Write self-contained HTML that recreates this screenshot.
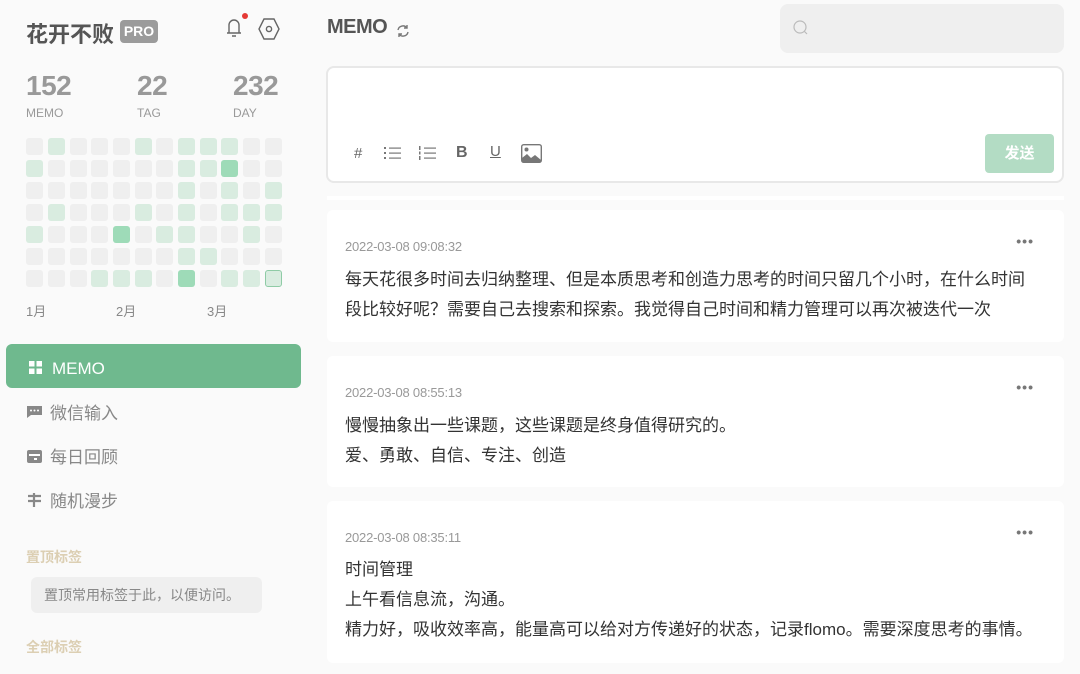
<!DOCTYPE html>
<html><head><meta charset="utf-8"><style>
*{margin:0;padding:0;box-sizing:border-box}
body{width:1080px;height:674px;background:#fafafa;font-family:"Liberation Sans","Noto Sans CJK SC",sans-serif;position:relative;overflow:hidden;color:#333}
.abs{position:absolute}
.cell{position:absolute;width:17px;height:17px;border-radius:3px;background:#efefef}
.c1{background:#d9ece0}.c2{background:#9edbb8}.c3{background:#d9ece0;border:1.5px solid #8fcba6}
.nav{position:absolute;left:26px;font-size:17px;color:#888;display:flex;align-items:center}
.card{position:absolute;left:327px;width:737px;background:#fff;border-radius:6px}
.ts{position:absolute;left:18px;font-size:13px;color:#999;letter-spacing:-0.2px}
.dots{position:absolute;right:30px;font-size:14px;color:#777;letter-spacing:1px;font-weight:bold}
.txt{position:absolute;left:18px;font-size:17px;line-height:30px;color:#333;white-space:nowrap}
</style></head><body>
<div class="abs" style="left:26px;top:17px;font-size:22px;font-weight:bold;color:#555">花开不败</div>
<div class="abs" style="left:120px;top:20px;width:38px;height:23px;background:#9b9b9b;border-radius:4px;color:#fff;font-size:14px;font-weight:bold;text-align:center;line-height:23px">PRO</div>
<svg class="abs" style="left:222px;top:12px" width="26" height="28" viewBox="0 0 26 28"><path d="M5 21h14M7 21V13a5 5 0 0 1 10 0v8M10 24h4" stroke="#666" stroke-width="1.4" fill="none"/><circle cx="23" cy="4" r="3" fill="#e53935"/></svg>
<svg class="abs" style="left:257px;top:17px" width="24" height="24" viewBox="0 0 24 24"><path d="M7 2h10l5 10-5 10H7L2 12z" stroke="#666" stroke-width="1.4" fill="none"/><circle cx="12" cy="12" r="2.6" stroke="#666" stroke-width="1.4" fill="none"/></svg>
<div class="abs" style="left:26px;top:70px;font-size:28px;font-weight:bold;color:#999;letter-spacing:-0.5px">152</div>
<div class="abs" style="left:137px;top:70px;font-size:28px;font-weight:bold;color:#999;letter-spacing:-0.5px">22</div>
<div class="abs" style="left:233px;top:70px;font-size:28px;font-weight:bold;color:#999;letter-spacing:-0.5px">232</div>
<div class="abs" style="left:26px;top:106px;font-size:12px;color:#999">MEMO</div>
<div class="abs" style="left:137px;top:106px;font-size:12px;color:#999">TAG</div>
<div class="abs" style="left:233px;top:106px;font-size:12px;color:#999">DAY</div>
<div id="grid"></div>
<div class="abs" style="left:26px;top:301px;font-size:13px;color:#888">1月</div>
<div class="abs" style="left:116px;top:301px;font-size:13px;color:#888">2月</div>
<div class="abs" style="left:207px;top:301px;font-size:13px;color:#888">3月</div>
<div class="abs" style="left:6px;top:344px;width:295px;height:44px;background:#6fb98e;border-radius:6px"></div>
<svg class="abs" style="left:29px;top:361px" width="13" height="13"><rect x="0" y="0" width="5.5" height="5.5" fill="#fff"/><rect x="7.5" y="0" width="5.5" height="5.5" fill="#fff"/><rect x="0" y="7.5" width="5.5" height="5.5" fill="#fff"/><rect x="7.5" y="7.5" width="5.5" height="5.5" fill="#fff"/></svg>
<div class="abs" style="left:52px;top:359px;font-size:17px;color:#fff">MEMO</div>
<svg class="abs" style="left:27px;top:405px" width="15" height="14"><path d="M0 1h15v9H4l-4 3z" fill="#888"/><circle cx="4" cy="5.5" r="1" fill="#fff"/><circle cx="7.5" cy="5.5" r="1" fill="#fff"/><circle cx="11" cy="5.5" r="1" fill="#fff"/></svg>
<div class="nav" style="left:50px;top:399px">微信输入</div>
<svg class="abs" style="left:27px;top:449px" width="15" height="14"><rect x="0" y="1" width="15" height="13" rx="2" fill="#888"/><rect x="2" y="5" width="11" height="2" fill="#fff"/><rect x="7" y="9" width="3" height="2" fill="#fff"/></svg>
<div class="nav" style="left:50px;top:443px">每日回顾</div>
<svg class="abs" style="left:27px;top:493px" width="15" height="14"><path d="M1 3h13M1 8h13M7 0v14" stroke="#888" stroke-width="2.2"/></svg>
<div class="nav" style="left:50px;top:487px">随机漫步</div>
<div class="abs" style="left:26px;top:547px;font-size:14px;font-weight:bold;color:#dccfb3">置顶标签</div>
<div class="abs" style="left:31px;top:577px;width:231px;height:36px;background:#efefef;border-radius:6px;font-size:14px;color:#888;line-height:36px;padding-left:13px">置顶常用标签于此，以便访问。</div>
<div class="abs" style="left:26px;top:637px;font-size:14px;font-weight:bold;color:#dccfb3">全部标签</div>

<div class="abs" style="left:327px;top:16px;font-size:20px;font-weight:bold;color:#555;letter-spacing:-0.5px">MEMO</div>
<svg class="abs" style="left:396px;top:24px" width="14" height="14" viewBox="0 0 14 14"><path d="M2 6a5 5 0 0 1 9-2M12 8a5 5 0 0 1-9 2" stroke="#777" stroke-width="1.4" fill="none"/><path d="M11 1v3H8M3 13v-3h3" stroke="#777" stroke-width="1.4" fill="none"/></svg>
<div class="abs" style="left:780px;top:4px;width:284px;height:49px;background:#efefef;border-radius:8px"></div>
<svg class="abs" style="left:792px;top:19px" width="18" height="18"><circle cx="8" cy="8" r="6" stroke="#bbb" stroke-width="1.2" fill="none"/><path d="M12 12l3 3" stroke="#bbb" stroke-width="1.2"/></svg>
<div class="abs" style="left:326px;top:66px;width:738px;height:117px;background:#fff;border:2px solid #e8e8e8;border-radius:8px"></div>
<div class="abs" style="left:354px;top:145px;font-size:15px;color:#666">#</div>
<svg class="abs" style="left:384px;top:146px" width="18" height="14"><g fill="#777"><rect x="0" y="1" width="2" height="2"/><rect x="0" y="6" width="2" height="2"/><rect x="0" y="11" width="2" height="2"/><rect x="5" y="1.5" width="12" height="1.2"/><rect x="5" y="6.5" width="12" height="1.2"/><rect x="5" y="11.5" width="12" height="1.2"/></g></svg>
<svg class="abs" style="left:419px;top:146px" width="18" height="14"><g fill="#777"><rect x="0" y="0" width="1.5" height="4"/><rect x="0" y="5.5" width="1.5" height="3"/><rect x="0" y="10" width="1.5" height="4"/><rect x="5" y="1.5" width="12" height="1.2"/><rect x="5" y="6.5" width="12" height="1.2"/><rect x="5" y="11.5" width="12" height="1.2"/></g></svg>
<div class="abs" style="left:456px;top:144px;font-size:16px;font-weight:bold;color:#666">B</div>
<div class="abs" style="left:490px;top:143px;font-size:15px;color:#666;text-decoration:underline">U</div>
<svg class="abs" style="left:521px;top:144px" width="21" height="19"><rect x="0.7" y="0.7" width="19.6" height="17.6" rx="2" fill="#fff" stroke="#777" stroke-width="1.4"/><circle cx="5.5" cy="5.5" r="2" fill="#777"/><path d="M1 18V14l5-4 4 4 4-3 6 5v2z" fill="#777"/></svg>
<div class="abs" style="left:985px;top:134px;width:69px;height:39px;background:#b3dcc4;border-radius:4px;color:#fff;font-size:15px;font-weight:bold;text-align:center;line-height:39px">发送</div>

<div class="abs" style="left:327px;top:196px;width:737px;height:4px;background:#fff"></div>
<div class="card" style="top:210px;height:132px">
<div class="ts" style="top:29px">2022-03-08 09:08:32</div><div class="dots" style="top:23px">•••</div>
<div class="txt" style="top:55px">每天花很多时间去归纳整理、但是本质思考和创造力思考的时间只留几个小时，在什么时间<br>段比较好呢？需要自己去搜索和探索。我觉得自己时间和精力管理可以再次被迭代一次</div>
</div>
<div class="card" style="top:356px;height:131px">
<div class="ts" style="top:29px">2022-03-08 08:55:13</div><div class="dots" style="top:23px">•••</div>
<div class="txt" style="top:55px">慢慢抽象出一些课题，这些课题是终身值得研究的。<br>爱、勇敢、自信、专注、创造</div>
</div>
<div class="card" style="top:501px;height:162px">
<div class="ts" style="top:29px">2022-03-08 08:35:11</div><div class="dots" style="top:23px">•••</div>
<div class="txt" style="top:54px">时间管理<br>上午看信息流，沟通。<br>精力好，吸收效率高，能量高可以给对方传递好的状态，记录flomo。需要深度思考的事情。</div>
</div>
<script>
var p=["010001011100","100000011200","000000010101","010001010111","100020110010","000000011000","000111020113"];
var xs=[26,48,70,91,113,135,156,178,200,221,243,265],h="";
for(var r=0;r<7;r++)for(var c=0;c<12;c++){var v=p[r][c];h+='<div class="cell'+(v!="0"?" c"+v:"")+'" style="left:'+xs[c]+'px;top:'+(138+r*22)+'px"></div>';}
document.getElementById("grid").innerHTML=h;
</script>
</body></html>
